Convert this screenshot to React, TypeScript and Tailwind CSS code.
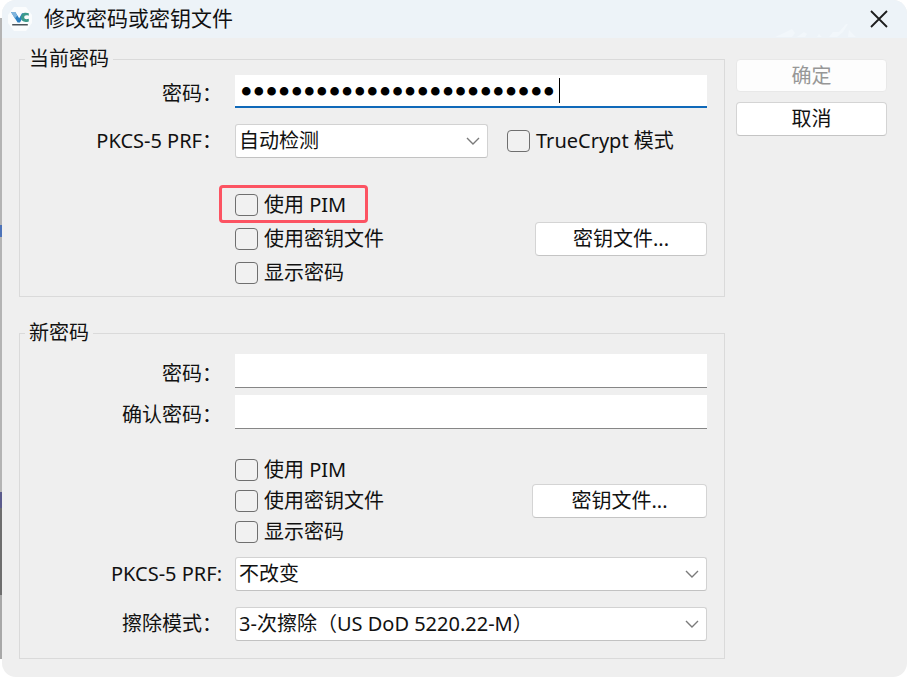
import { useId, useState } from 'react';
import type { ReactNode } from 'react';

const FONT = "font-['Noto_Sans','Noto_Sans_CJK_SC',sans-serif]";

// 25 characters, shown as dots
const CURRENT_PASSWORD = 'correct-horse-battery-stp';

const AppLogo = () => (
  <svg viewBox="0 0 24 24" className="size-6 shrink-0" aria-hidden="true">
    <path d="M6 0h12l6 8v8l-6 8H6l-6-8V8z" fill="#fafcfd" />
    <path d="M3 5h4.200l4 6.200 2.800-5h3.200L12 15.600H9.600z" fill="#2b7fc0" />
    <path d="M3 5h4.200l2.200 3.400-2.600 3.200z" fill="#7fb4dc" />
    <path d="M20.800 6.200c-5.400-1.800-7.800 1-7.800 4.400 0 3.600 3 5.200 7.800 3.800v-2.600c-2.800.9-4.600.3-4.600-1.500 0-1.900 1.800-2.500 4.600-1.600z" fill="#3c9a8b" />
    <path d="M4.200 17.700h15.600" stroke="#4a5358" strokeWidth="1.500" />
  </svg>
);

const TitleScenery = () => (
  <svg viewBox="0 0 84 14" className="ml-auto h-[14px] w-[84px] self-end" aria-hidden="true">
    <path d="M0 14l9-4 8-4 3 4-3 4zM22 14l7-5 3 2-2 3zM42 14l2-3 3 3zM54 14l4-5 6 0 7-8 2 0-5 8-6 5zM74 7l7 7h-8z" fill="#f2f7fb" />
  </svg>
);

const ChevronIcon = () => (
  <svg
    viewBox="0 0 14 8"
    className="pointer-events-none absolute right-2 top-[13px] h-2 w-[14px]"
    fill="none"
    stroke="#7a7a7a"
    strokeWidth="1.4"
    aria-hidden="true"
  >
    <path d="M1 1l6 6 6-6" />
  </svg>
);

type GroupProps = { title: string; className: string; children: ReactNode };

const Group = ({ title, className, children }: GroupProps) => (
  <fieldset className={`min-w-0 border border-[#dadada] pr-[17px] ${className}`}>
    <legend className="ml-[5px] px-1 leading-7">{title}</legend>
    {children}
  </fieldset>
);

type RowProps = { label: string; id: string; align: string; children: ReactNode };

const Row = ({ label, id, align, children }: RowProps) => (
  <div className={`grid grid-cols-[215px_1fr] ${align}`}>
    <label htmlFor={id} className="pr-[13px] text-right leading-7">{label}</label>
    {children}
  </div>
);

const Select = ({ id, options, className }: { id: string; options: string[]; className: string }) => (
  <div className={`relative ${className}`}>
    <select
      id={id}
      className="h-[34px] w-full appearance-none rounded-[3px] border border-[#d2d2d2] border-b-[#c2c2c2] bg-white pl-[3px] pr-8 outline-none"
    >
      {options.map((option) => (
        <option key={option}>{option}</option>
      ))}
    </select>
    <ChevronIcon />
  </div>
);

type CheckboxProps = { label: string; height: string; highlighted?: boolean };

const Checkbox = ({ label, height, highlighted }: CheckboxProps) => {
  const [checked, setChecked] = useState(false);
  return (
    <label className={`relative flex w-fit items-center gap-[6px] whitespace-nowrap ${height}`}>
      <input
        type="checkbox"
        checked={checked}
        onChange={(e) => setChecked(e.target.checked)}
        className="h-[22px] w-[23px] shrink-0 appearance-none rounded-[4px] border border-[#6f6f6f] bg-[#f1f1f1] checked:bg-[#0067c0]"
      />
      {label}
      {highlighted && (
        <span className="pointer-events-none absolute -left-4 -right-[22px] -top-[3px] h-[38px] rounded-[4px] border-[3px] border-[#fc5362]" />
      )}
    </label>
  );
};

const CheckboxBlock = ({ height, buttonWidth, highlightPim, className }: {
  height: string;
  buttonWidth: string;
  highlightPim?: boolean;
  className: string;
}) => (
  <div className={`flex items-center justify-between pl-[215px] ${className}`}>
    <div>
      <Checkbox label="使用 PIM" height={height} highlighted={highlightPim} />
      <Checkbox label="使用密钥文件" height={height} />
      <Checkbox label="显示密码" height={height} />
    </div>
    <button className={`h-[34px] rounded-[4px] border border-[#d4d4d4] border-b-[#c4c4c4] bg-white ${buttonWidth}`}>
      密钥文件...
    </button>
  </div>
);

const BackgroundEdge = () => (
  <div className="flex w-[2px] shrink-0 flex-col py-[18px]">
    <div className="h-[207px] bg-[#b4b4b4]" />
    <div className="h-3 bg-[#4d73b8]" />
    <div className="h-[255px] bg-[#b4b4b4]" />
    <div className="h-4 bg-[#5b5b8c]" />
    <div className="h-[87px] bg-[#6e6e6e]" />
    <div className="flex-1 bg-[#a8a8a8]" />
  </div>
);

const App = () => {
  const id = useId();
  const [current, setCurrent] = useState(CURRENT_PASSWORD);

  return (
    <div className={`flex min-h-screen items-start bg-white text-[20px] text-[#111] ${FONT}`}>
      <div className="flex w-full">
        <BackgroundEdge />
        <div className="min-w-0 flex-1 overflow-hidden rounded-[14px] bg-[#efefef]">
          <header className="flex h-[38px] items-center bg-[#edf3f8] pb-px pl-[6px] pr-[18px]">
            <AppLogo />
            <h1 className="pl-3 text-[21px]">修改密码或密钥文件</h1>
            <TitleScenery />
            <button aria-label="关闭" className="ml-[10px] flex size-5 items-center justify-center">
              <svg viewBox="0 0 18 18" className="size-[18px]" fill="none" stroke="#1c1c1c" strokeWidth="1.8">
                <path d="M1 1l16 16M17 1L1 17" />
              </svg>
            </button>
          </header>

          <main className="flex gap-[11px] pb-[18px] pl-[17px] pr-5 pt-[7px]">
            <div className="flex min-w-0 flex-1 flex-col gap-[22px]">
              <Group title="当前密码" className="pb-[6px] pt-[2px]">
                <Row label="密码：" id={`${id}-current`} align="items-end">
                  <div className="relative">
                    <input
                      id={`${id}-current`}
                      type="password"
                      value={current}
                      onChange={(e) => setCurrent(e.target.value)}
                      className="block h-[33px] w-full border-b-2 border-[#0f69b9] bg-white pl-[5px] pt-[3px] font-['Liberation_Serif',serif] text-[36px] leading-7 text-black caret-transparent outline-none"
                    />
                    <span className="absolute left-[324px] top-[3px] h-[25px] w-px bg-black" />
                  </div>
                </Row>
                <div className="pt-4">
                  <Row label="PKCS-5 PRF：" id={`${id}-prf`} align="items-center">
                    <div className="flex items-center gap-[19px]">
                      <Select id={`${id}-prf`} options={['自动检测', 'SHA-512', 'SHA-256', 'Whirlpool']} className="w-[253px]" />
                      <Checkbox label="TrueCrypt 模式" height="h-[34px]" />
                    </div>
                  </Row>
                </div>
                <CheckboxBlock height="h-[34px]" buttonWidth="w-[172px]" highlightPim className="pt-[30px]" />
              </Group>

              <Group title="新密码" className="pb-[17px] pt-[7px]">
                <div className="flex flex-col gap-[7px]">
                  <Row label="密码：" id={`${id}-new`} align="items-end">
                    <input id={`${id}-new`} type="password" className="h-[34px] w-full border-b border-[#868686] bg-white px-1 outline-none" />
                  </Row>
                  <Row label="确认密码：" id={`${id}-confirm`} align="items-end">
                    <input id={`${id}-confirm`} type="password" className="h-[34px] w-full border-b border-[#868686] bg-white px-1 outline-none" />
                  </Row>
                </div>
                <CheckboxBlock height="h-[31px]" buttonWidth="w-[175px]" className="pb-[10px] pt-[25px]" />
                <div className="flex flex-col gap-4">
                  <Row label="PKCS-5 PRF:" id={`${id}-new-prf`} align="items-center">
                    <Select id={`${id}-new-prf`} options={['不改变', 'SHA-512', 'SHA-256', 'Whirlpool']} className="w-full" />
                  </Row>
                  <Row label="擦除模式：" id={`${id}-wipe`} align="items-center">
                    <Select id={`${id}-wipe`} options={['3-次擦除（US DoD 5220.22-M）', '无']} className="w-full" />
                  </Row>
                </div>
              </Group>
            </div>

            <div className="flex w-[151px] shrink-0 flex-col gap-[10px] pt-[14px]">
              <button disabled className="h-[33px] rounded-[4px] border border-[#e8e8e8] bg-[#fdfdfd] text-[#979797]">
                确定
              </button>
              <button className="h-[34px] rounded-[4px] border border-[#d4d4d4] border-b-[#c4c4c4] bg-white">
                取消
              </button>
            </div>
          </main>
        </div>
      </div>
    </div>
  );
};

export default App;
